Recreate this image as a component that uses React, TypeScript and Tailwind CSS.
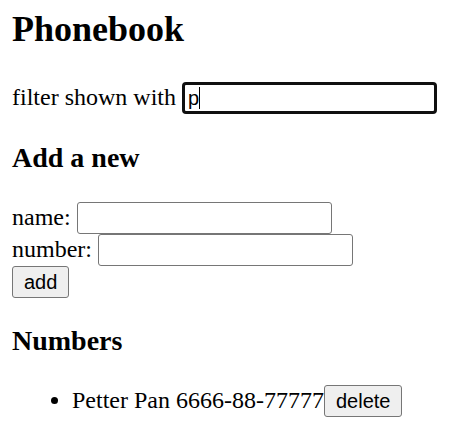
import React from "react";

export default function App() {
  return (
    <div className="bg-white text-black px-[12px] pt-[9px] font-['Liberation_Serif',serif] text-[24px]">
      <h2 className="text-[36px] font-bold leading-[41px] mb-[32px]">Phonebook</h2>
      <div className="leading-[28px]">
        filter shown with{" "}
        <span className="relative inline-block align-baseline">
          <input
            readOnly
            value="p"
            className="w-[255px] h-[32px] border-[3px] border-[#101010] rounded-[4px] px-[3px] font-['Liberation_Sans',sans-serif] text-[20px] text-black outline-none align-baseline"
          />
          <span className="absolute left-[17px] top-[5px] w-[1px] h-[22px] bg-black" />
        </span>
      </div>
      <h3 className="text-[28px] font-bold leading-[32px] mt-[28px] mb-[28px]">Add a new</h3>
      <form onSubmit={(e) => e.preventDefault()}>
        <div className="leading-[28px]">
          name:{" "}
          <input className="w-[255px] h-[32px] border border-[#767676] rounded-[3px] px-[3px] font-['Liberation_Sans',sans-serif] text-[20px] align-baseline bg-white" />
        </div>
        <div className="leading-[28px]">
          number:{" "}
          <input className="w-[255px] h-[32px] border border-[#767676] rounded-[3px] px-[3px] font-['Liberation_Sans',sans-serif] text-[20px] align-baseline bg-white" />
        </div>
        <div className="leading-[28px]">
          <button
            type="submit"
            className="h-[32px] px-[11px] border border-[#767676] rounded-[3px] bg-[#efefef] font-['Liberation_Sans',sans-serif] text-[20px] leading-[23px] text-black align-baseline"
          >
            add
          </button>
        </div>
      </form>
      <h3 className="text-[28px] font-bold leading-[32px] mt-[27px] mb-[28px]">Numbers</h3>
      <ul className="list-disc pl-[60px]">
        <li className="leading-[28px]">
          Petter Pan 6666-88-77777
          <button className="h-[32px] px-[11px] border border-[#767676] rounded-[3px] bg-[#efefef] font-['Liberation_Sans',sans-serif] text-[20px] leading-[23px] text-black align-baseline">
            delete
          </button>
        </li>
      </ul>
    </div>
  );
}
